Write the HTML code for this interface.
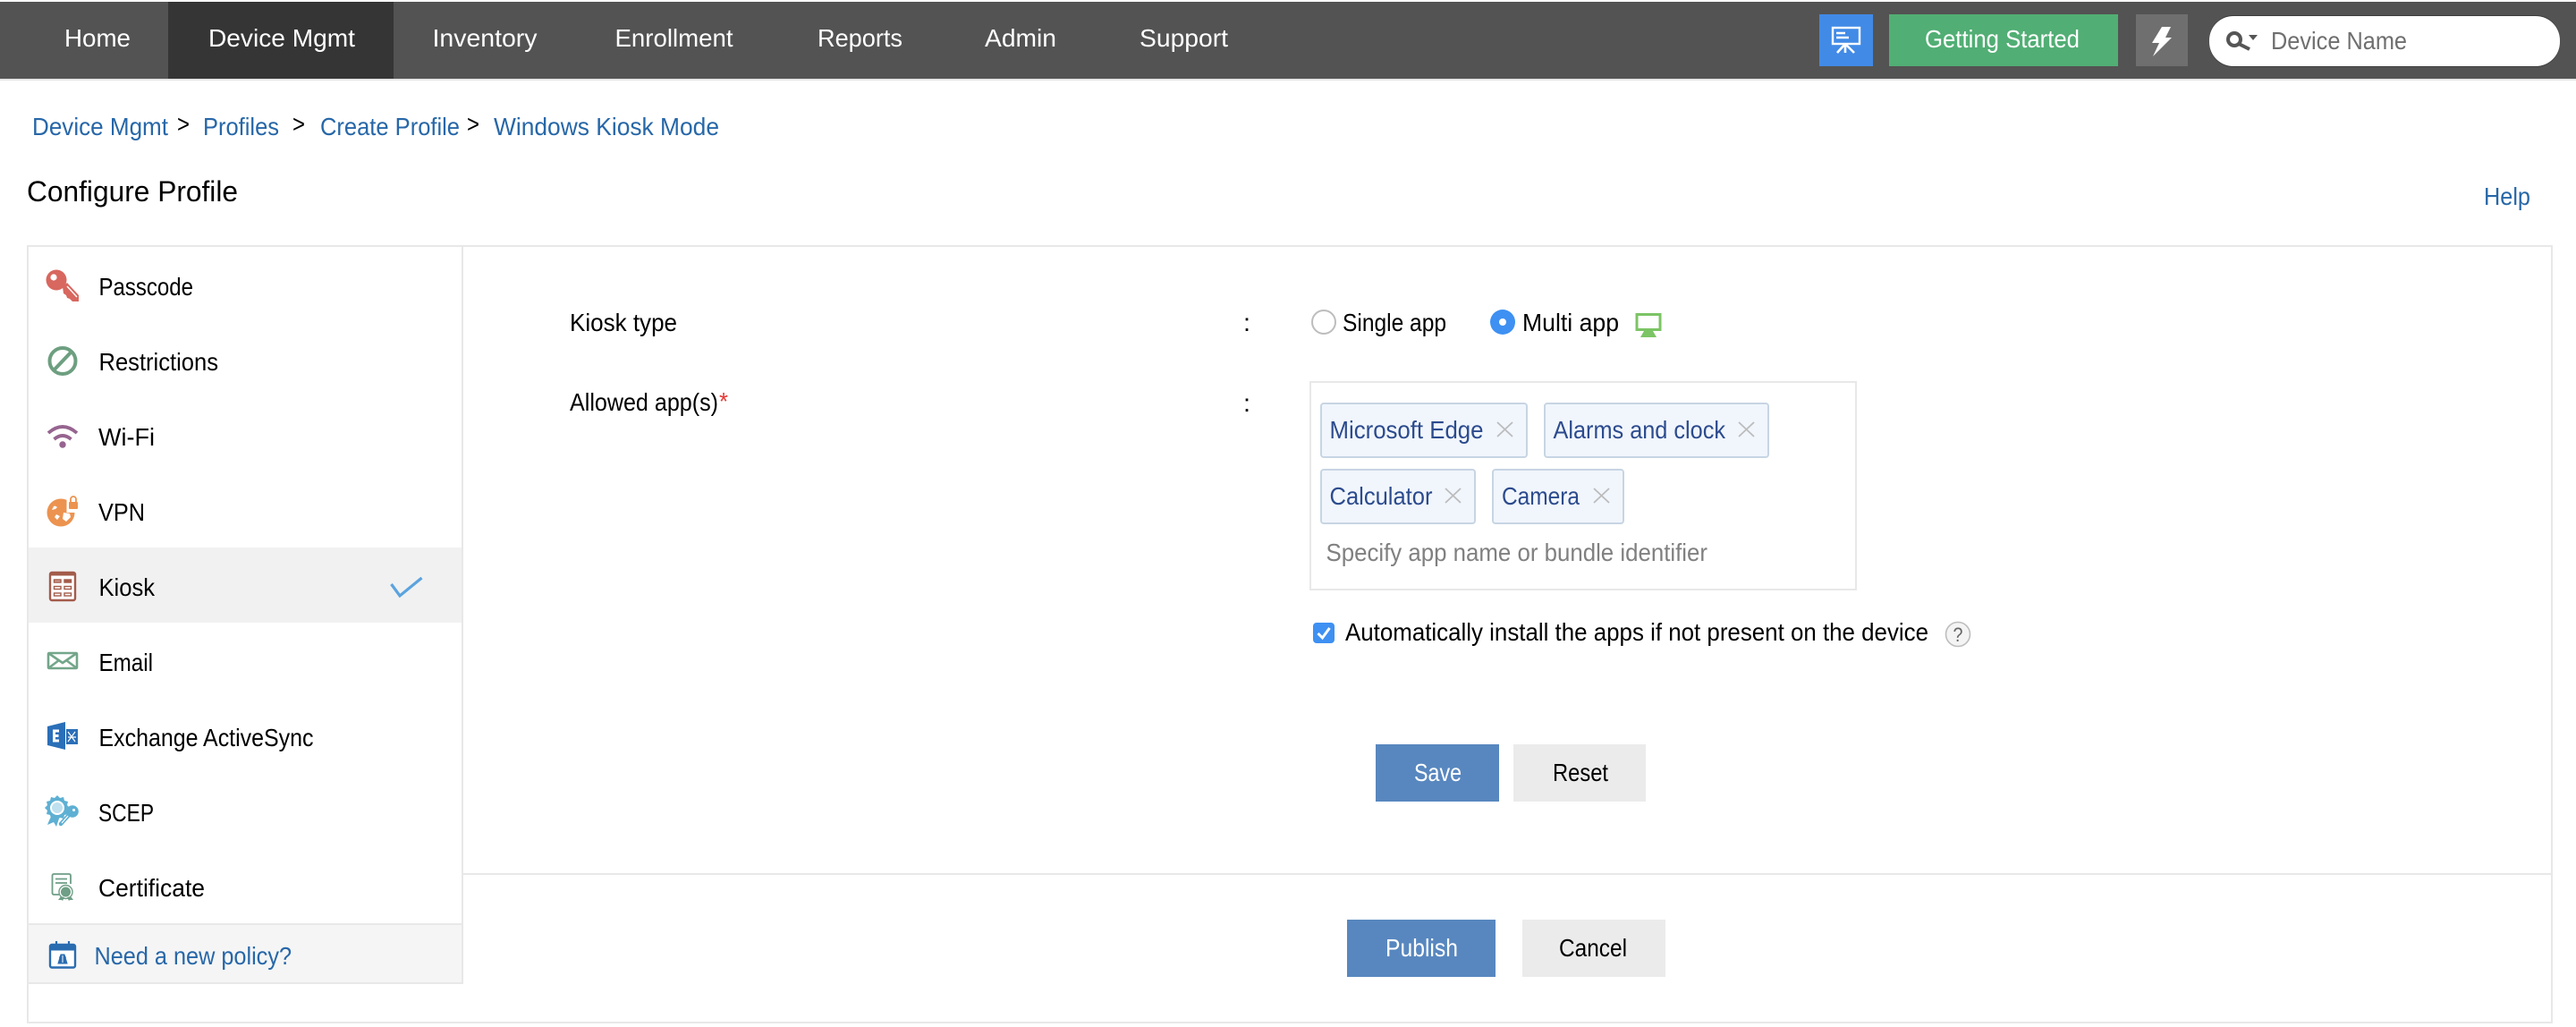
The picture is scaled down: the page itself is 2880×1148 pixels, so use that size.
<!DOCTYPE html>
<html><head><meta charset="utf-8"><title>Configure Profile</title>
<style>
html,body{margin:0;padding:0;background:#fff;width:2880px;height:1148px;overflow:hidden}
svg{display:block}
text{font-family:"Liberation Sans",sans-serif;font-size:28px;fill:#000}
.n{fill:#fff}.l{fill:#2767a8}.c{fill:#2c4b8d}
</style></head><body>
<svg xmlns="http://www.w3.org/2000/svg" width="2880" height="1148" viewBox="0 0 2880 1148">
<rect width="2880" height="1148" fill="#fff"/>
<!-- nav -->
<rect x="0" y="2" width="2880" height="86" fill="#535353"/>
<rect x="0" y="88" width="2880" height="2" fill="#e5e5e5"/>
<rect x="188" y="2" width="252" height="86" fill="#353535"/>
<text class="n" x="72" y="52" textLength="74" lengthAdjust="spacingAndGlyphs">Home</text>
<text class="n" x="233" y="52" textLength="164" lengthAdjust="spacingAndGlyphs">Device Mgmt</text>
<text class="n" x="483.500" y="52" textLength="117" lengthAdjust="spacingAndGlyphs">Inventory</text>
<text class="n" x="687.500" y="52" textLength="132" lengthAdjust="spacingAndGlyphs">Enrollment</text>
<text class="n" x="914" y="52" textLength="95" lengthAdjust="spacingAndGlyphs">Reports</text>
<text class="n" x="1101" y="52" textLength="80" lengthAdjust="spacingAndGlyphs">Admin</text>
<text class="n" x="1274" y="52" textLength="99" lengthAdjust="spacingAndGlyphs">Support</text>
<!-- top right -->
<rect x="2034" y="16" width="60" height="58" fill="#418ae6"/>
<g fill="none" stroke="#fff" stroke-width="2.400">
<rect x="2049" y="31" width="30" height="18"/>
<path d="M2053 37H2063M2053 42H2067"/>
<path d="M2063 49L2054 59M2063 49V59M2063 49L2073 59" stroke-width="2.600"/>
</g>
<rect x="2112" y="16" width="256" height="58" fill="#51ae74"/>
<text class="n" x="2152" y="53" textLength="173" lengthAdjust="spacingAndGlyphs">Getting Started</text>
<rect x="2388" y="16" width="58" height="58" fill="#6f6f6f"/>
<polygon points="2417,30 2427,30 2421,42 2428,42 2407,63 2414,48 2406,48" fill="#fff"/>
<rect x="2470" y="17" width="392" height="58" rx="27" fill="#3d3d3d"/>
<rect x="2470" y="18" width="392" height="56" rx="27" fill="#fff"/>
<g fill="none" stroke="#555" stroke-width="4"><circle cx="2498" cy="44" r="7"/><path d="M2503 49L2515 55"/></g>
<polygon points="2514,39 2524,39 2519,45" fill="#555"/>
<text x="2539" y="55" textLength="152" lengthAdjust="spacingAndGlyphs" style="fill:#6f6f6f">Device Name</text>
<!-- breadcrumb -->
<text class="l" x="36" y="151" textLength="152" lengthAdjust="spacingAndGlyphs">Device Mgmt</text>
<text x="198" y="148" textLength="14" lengthAdjust="spacingAndGlyphs">&gt;</text>
<text class="l" x="227" y="151" textLength="85" lengthAdjust="spacingAndGlyphs">Profiles</text>
<text x="327" y="148" textLength="14" lengthAdjust="spacingAndGlyphs">&gt;</text>
<text class="l" x="358" y="151" textLength="156" lengthAdjust="spacingAndGlyphs">Create Profile</text>
<text x="522" y="148" textLength="14" lengthAdjust="spacingAndGlyphs">&gt;</text>
<text class="l" x="552" y="151" textLength="252" lengthAdjust="spacingAndGlyphs">Windows Kiosk Mode</text>
<text x="30" y="225" textLength="236" lengthAdjust="spacingAndGlyphs" style="font-size:32px">Configure Profile</text>
<text class="l" x="2777" y="229" textLength="52" lengthAdjust="spacingAndGlyphs">Help</text>
<!-- panel frame -->
<rect x="31" y="275" width="2822" height="868" fill="none" stroke="#e8e8e8" stroke-width="2"/>
<rect x="516" y="276" width="2" height="824" fill="#e8e8e8"/>
<rect x="518" y="976" width="2334" height="2" fill="#e8e8e8"/>
<rect x="32" y="612" width="484" height="84" fill="#f1f1f1"/>
<rect x="32" y="1032" width="486" height="68" fill="#e8e8e8"/>
<rect x="32" y="1034" width="484" height="64" fill="#f5f5f5"/>
<!-- sidebar labels -->
<text x="110.500" y="330" textLength="105.500" lengthAdjust="spacingAndGlyphs">Passcode</text>
<text x="110.500" y="414" textLength="133.500" lengthAdjust="spacingAndGlyphs">Restrictions</text>
<text x="110" y="498" textLength="63" lengthAdjust="spacingAndGlyphs">Wi-Fi</text>
<text x="110" y="582" textLength="52" lengthAdjust="spacingAndGlyphs">VPN</text>
<text x="110.500" y="666" textLength="62.500" lengthAdjust="spacingAndGlyphs">Kiosk</text>
<text x="110.500" y="750" textLength="60.500" lengthAdjust="spacingAndGlyphs">Email</text>
<text x="110.500" y="834" textLength="240" lengthAdjust="spacingAndGlyphs">Exchange ActiveSync</text>
<text x="110" y="918" textLength="62" lengthAdjust="spacingAndGlyphs">SCEP</text>
<text x="110" y="1002" textLength="119" lengthAdjust="spacingAndGlyphs">Certificate</text>
<text class="l" x="105.500" y="1078" textLength="220.500" lengthAdjust="spacingAndGlyphs">Need a new policy?</text>
<!-- key -->
<path d="M70 321L75 316L88 330V337H81L78 334L75 333L74 330L71 328Z" fill="#d8675f"/>
<circle cx="63" cy="313" r="11.500" fill="#d8675f"/>
<circle cx="60" cy="310" r="3.600" fill="#fff"/>
<path d="M75 320L86 332" stroke="#fff" stroke-width="1.400"/>
<!-- restrictions -->
<g fill="none" stroke="#6d9f80" stroke-width="4"><circle cx="70" cy="403.500" r="14.500"/><path d="M60 414L80 393"/></g>
<!-- wifi -->
<g fill="none" stroke="#96648f" stroke-width="3.800"><path d="M54 484Q70 470 86 484"/><path d="M60.500 491Q70 483 79.500 491"/></g>
<circle cx="70" cy="497" r="3.700" fill="#96648f"/>
<!-- vpn -->
<circle cx="68" cy="573" r="15.500" fill="#ec9350"/>
<path d="M60 566Q62 565 64 567L62 569L58 570ZM71 573L78 574L79 578L74 583L70 580ZM63 575L67 577L64 581L61 578Z" fill="#fff"/>
<rect x="74.500" y="555" width="15" height="18" fill="#fff"/>
<rect x="77" y="561" width="10" height="8" rx="1" fill="#ec9350"/>
<path d="M79 561V558A3 3 0 0 1 85 558V561" fill="none" stroke="#ec9350" stroke-width="1.800"/>
<!-- kiosk -->
<rect x="56" y="640" width="28" height="31" rx="2" fill="#fff" stroke="#a35b4a" stroke-width="2.400"/>
<rect x="56" y="640" width="28" height="3.500" fill="#a35b4a"/>
<g fill="#fff" stroke="#a35b4a" stroke-width="1.400"><rect x="60.500" y="648" width="7.500" height="3" fill="#cfa094"/><rect x="72" y="648" width="7.500" height="3" fill="#a35b4a"/><rect x="60.500" y="655.500" width="7.500" height="3"/><rect x="72" y="655.500" width="7.500" height="3"/><rect x="60.500" y="663" width="7.500" height="3"/><rect x="72" y="663" width="7.500" height="3"/></g>
<path d="M437.500 653L447 666L471.500 646" fill="none" stroke="#5ba3df" stroke-width="3.200"/>
<!-- email -->
<g fill="none" stroke="#73a68a" stroke-width="2.600"><rect x="54" y="730" width="32" height="17" rx="1"/><path d="M54 730L70 741L86 730M54 747L66 738M86 747L74 738"/></g>
<!-- exchange -->
<polygon points="53,812 73,807 73,838 53,833" fill="#2a6fb8"/>
<rect x="74" y="815" width="13" height="17" fill="#2a6fb8"/>
<path d="M59 815.500H66V818.500H62V821H65.500V824H62V826.500H66V829.500H59Z" fill="#fff"/>
<path d="M76 818L84 829M84 818L76 829M76 824H79M81 824H85" stroke="#fff" stroke-width="1.200" fill="none"/>
<!-- scep -->
<path d="M55 917L53 922L60 919L63 924L66 915L58 911Z" fill="#5eb0d3"/>
<path d="M64 889L67 892L71 891L72 895L76 896L75 900L78 903L75 906L76 910L72 911L71 915L67 914L64 917L61 914L57 915L56 911L52 910L53 906L50 903L53 900L52 896L56 895L57 891L61 892Z" fill="#5eb0d3"/>
<circle cx="64" cy="903" r="7" fill="#bfe0ee" stroke="#fff" stroke-width="2"/>
<path d="M77 911L68 921" stroke="#5eb0d3" stroke-width="4.500" stroke-linecap="round"/>
<path d="M76 912L69 920" stroke="#fff" stroke-width="1.200"/>
<circle cx="81" cy="907" r="6.800" fill="#5eb0d3"/>
<circle cx="82.500" cy="905.500" r="1.500" fill="#fff"/>
<!-- certificate -->
<g fill="none" stroke="#6f9f86" stroke-width="1.800"><path d="M66 1000H60A2 2 0 0 1 58.500 998V978.500A2 2 0 0 1 60 977H77A2 2 0 0 1 79 978.500V988"/><path d="M62 982.500H75M62 987H75" stroke-width="1.800"/></g>
<circle cx="73.500" cy="997" r="5.500" fill="#6f9f86"/>
<circle cx="73.500" cy="997" r="7.500" fill="none" stroke="#6f9f86" stroke-width="1.400"/>
<path d="M68 1002L65 1006L69 1006L70 1007L72 1003ZM79 1002L82 1006L78 1006L77 1007L75 1003Z" fill="#6f9f86"/>
<!-- calendar -->
<rect x="56" y="1056" width="28" height="25.500" rx="2" fill="#fff" stroke="#2a6cb0" stroke-width="2.400"/>
<rect x="56" y="1056" width="28" height="6.500" fill="#2a6cb0"/>
<g fill="none" stroke="#2a6cb0" stroke-width="2.200"><path d="M63 1052V1059M77 1052V1059"/></g>
<path d="M68 1067H72L75 1077H65ZM66 1070H74" fill="#2a6cb0" stroke="#2a6cb0" stroke-width="1"/>
<path d="M70 1068V1076" stroke="#fff" stroke-width="1"/>
<!-- form -->
<text x="637" y="370" textLength="120" lengthAdjust="spacingAndGlyphs">Kiosk type</text>
<text x="637" y="459" textLength="166" lengthAdjust="spacingAndGlyphs">Allowed app(s)</text>
<text x="804" y="458" textLength="10" lengthAdjust="spacingAndGlyphs" style="fill:#e53935">*</text>
<text x="1390" y="370" textLength="8" lengthAdjust="spacingAndGlyphs">:</text>
<text x="1390" y="460" textLength="8" lengthAdjust="spacingAndGlyphs">:</text>
<circle cx="1480" cy="360" r="13" fill="#fff" stroke="#bdbdbd" stroke-width="2"/>
<text x="1501" y="370" textLength="116" lengthAdjust="spacingAndGlyphs">Single app</text>
<circle cx="1680" cy="360" r="14" fill="#3e90f2"/><circle cx="1680" cy="360" r="4" fill="#fff"/>
<text x="1702" y="370" textLength="108" lengthAdjust="spacingAndGlyphs">Multi app</text>
<rect x="1830" y="351.500" width="26" height="17" fill="#fff" stroke="#7cc465" stroke-width="3"/>
<polygon points="1838,370 1848,370 1852,377 1834,377" fill="#7cc465"/>
<rect x="1465" y="427" width="610" height="232" fill="#fff" stroke="#e8e8e8" stroke-width="2"/>
<g fill="#f1f6fd" stroke="#c7d5e3" stroke-width="2">
<rect x="1477" y="451" width="230" height="60" rx="3"/>
<rect x="1727" y="451" width="250" height="60" rx="3"/>
<rect x="1477" y="525" width="172" height="60" rx="3"/>
<rect x="1669" y="525" width="146" height="60" rx="3"/>
</g>
<text class="c" x="1486.500" y="490" textLength="172" lengthAdjust="spacingAndGlyphs">Microsoft Edge</text>
<text class="c" x="1736.500" y="490" textLength="192.500" lengthAdjust="spacingAndGlyphs">Alarms and clock</text>
<text class="c" x="1486.500" y="564" textLength="115" lengthAdjust="spacingAndGlyphs">Calculator</text>
<text class="c" x="1679" y="564" textLength="87" lengthAdjust="spacingAndGlyphs">Camera</text>
<g fill="none" stroke="#bcbcbc" stroke-width="1.800">
<path d="M1674 472L1691 488M1691 472L1674 488"/>
<path d="M1944 472L1961 488M1961 472L1944 488"/>
<path d="M1616 546L1633 562M1633 546L1616 562"/>
<path d="M1782 546L1799 562M1799 546L1782 562"/>
</g>
<text x="1482.500" y="627" textLength="426.500" lengthAdjust="spacingAndGlyphs" style="fill:#808080">Specify app name or bundle identifier</text>
<rect x="1468" y="696" width="24" height="23" rx="4" fill="#3e90f2"/>
<path d="M1473.500 708L1478.500 713L1486.500 702" fill="none" stroke="#fff" stroke-width="3"/>
<text x="1504" y="716" textLength="652" lengthAdjust="spacingAndGlyphs">Automatically install the apps if not present on the device</text>
<circle cx="2189" cy="709" r="13.500" fill="#f4f4f4" stroke="#bdbdbd" stroke-width="1.600"/>
<text x="2183.500" y="717" textLength="11" lengthAdjust="spacingAndGlyphs" style="font-size:22px;fill:#666">?</text>
<!-- buttons -->
<rect x="1538" y="832" width="138" height="64" fill="#5887bf"/>
<text class="n" x="1581" y="873" textLength="53" lengthAdjust="spacingAndGlyphs">Save</text>
<rect x="1692" y="832" width="148" height="64" fill="#ebebeb"/>
<text x="1736" y="873" textLength="62" lengthAdjust="spacingAndGlyphs">Reset</text>
<rect x="1506" y="1028" width="166" height="64" fill="#5887bf"/>
<text class="n" x="1549" y="1069" textLength="81" lengthAdjust="spacingAndGlyphs">Publish</text>
<rect x="1702" y="1028" width="160" height="64" fill="#ebebeb"/>
<text x="1743" y="1069" textLength="76" lengthAdjust="spacingAndGlyphs">Cancel</text>
</svg>
</body></html>
